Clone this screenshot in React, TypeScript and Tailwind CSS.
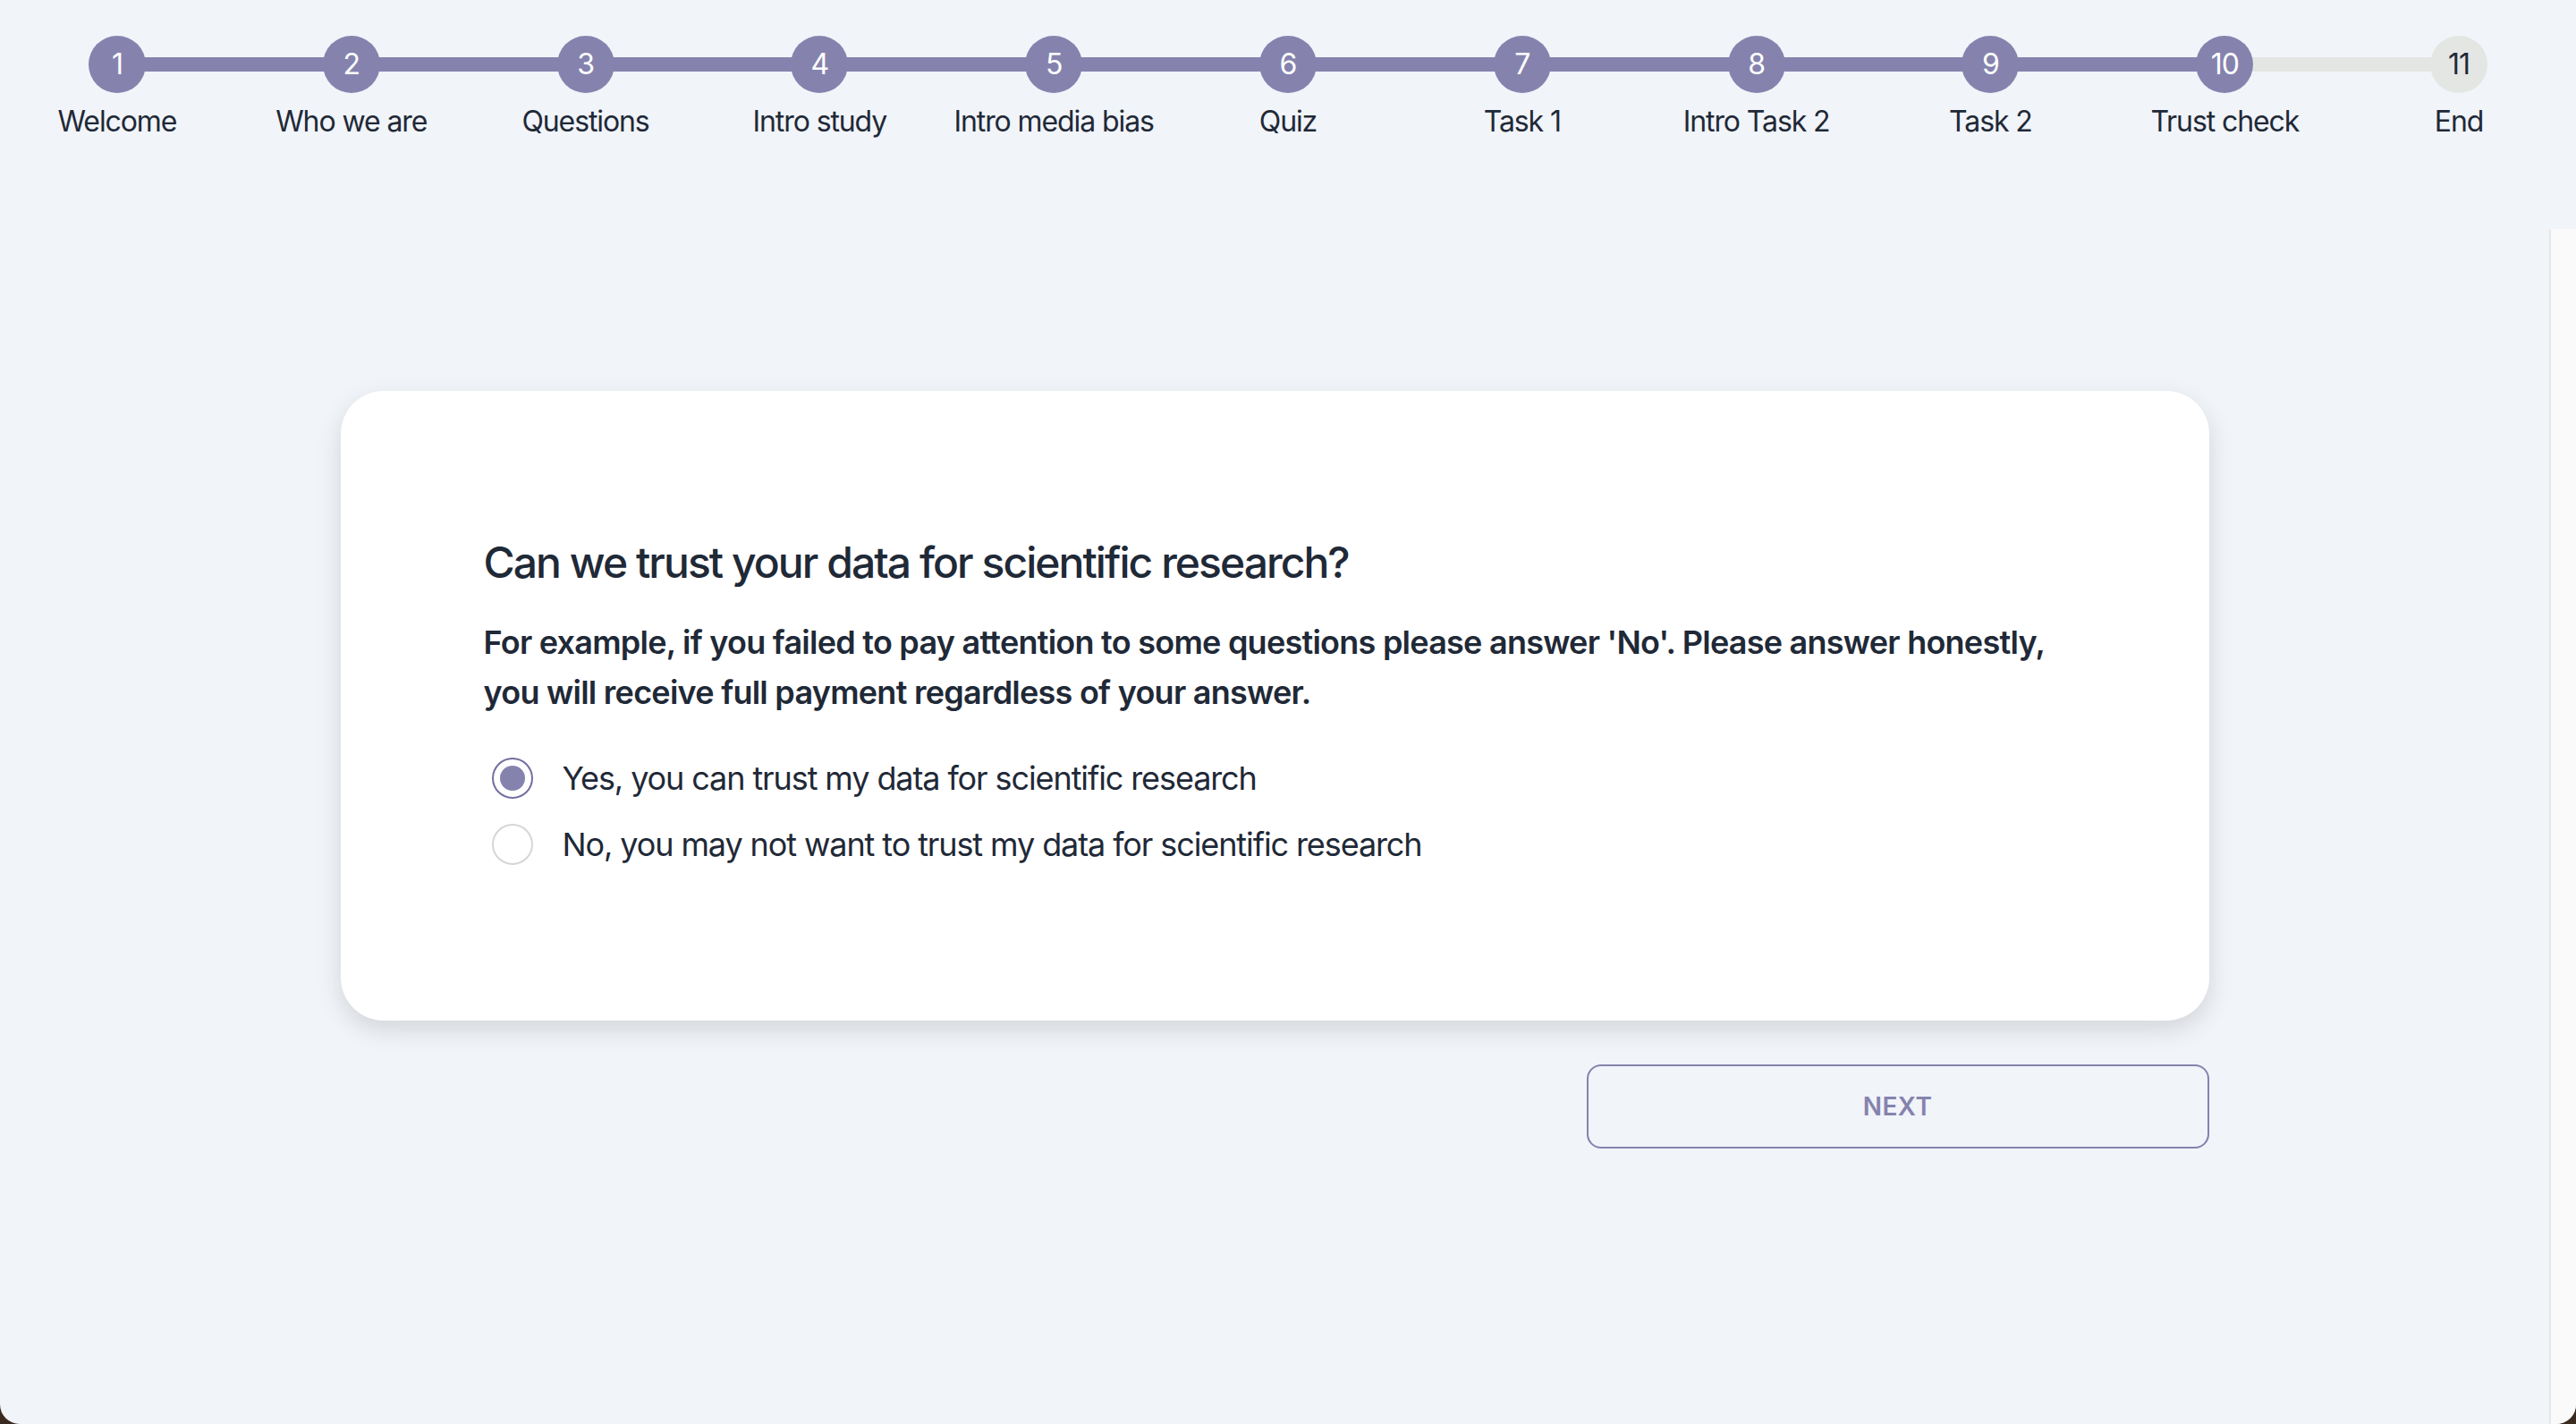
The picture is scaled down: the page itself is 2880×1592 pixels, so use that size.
const steps = [
  "Welcome",
  "Who we are",
  "Questions",
  "Intro study",
  "Intro media bias",
  "Quiz",
  "Task 1",
  "Intro Task 2",
  "Task 2",
  "Trust check",
  "End",
]

const current = 10

function Stepper() {
  return (
    <div className="grid grid-cols-11 h-[256px]">
      {steps.map((label, i) => {
        const n = i + 1
        const done = n <= current
        return (
          <div key={label} className="relative flex flex-col items-center pt-[40px]">
            {i > 0 && (
              <div
                className={
                  n <= current
                    ? "absolute top-[64px] h-[16px] left-[-50%] right-[50%] bg-[#8583ae]"
                    : "absolute top-[64px] h-[16px] left-[-50%] right-[50%] bg-[#e4e6e4]"
                }
              />
            )}
            <div
              className={
                done
                  ? "relative z-10 flex items-center justify-center w-[64px] h-[64px] rounded-full bg-[#8583ae] text-white text-[32px] tracking-[-1px]"
                  : "relative z-10 flex items-center justify-center w-[64px] h-[64px] rounded-full bg-[#e4e6e4] text-[#1f2937] text-[32px] tracking-[-1px]"
              }
            >
              {n}
            </div>
            <div className="mt-[8px] text-[32px] leading-[48px] tracking-[-1.1px] text-[#1f2937] whitespace-nowrap">
              {label}
            </div>
          </div>
        )
      })}
    </div>
  )
}

function Radio({ checked, label }: { checked?: boolean; label: string }) {
  return (
    <label className="flex items-center h-[74px]">
      <span
        className={
          checked
            ? "ml-[9px] flex items-center justify-center w-[46px] h-[46px] rounded-full border-2 border-[#726fa0]"
            : "ml-[9px] flex items-center justify-center w-[46px] h-[46px] rounded-full border-2 border-[#d6d6da]"
        }
      >
        {checked && <span className="w-[28px] h-[28px] rounded-full bg-[#8583ae]" />}
      </span>
      <span className="ml-[33px] text-[36px] tracking-[-1.1px] text-[#1f2937]">{label}</span>
    </label>
  )
}

export default function App() {
  return (
    <div className="w-[2880px] h-[1592px] bg-[#3a2a20] font-['Inter',sans-serif]">
      <div className="flex flex-col h-full bg-[#f1f4f9] rounded-b-[22px] overflow-hidden">
        <Stepper />
        <div className="flex flex-1 min-h-0">
          <main className="flex-1 pt-[181px]">
            <div className="w-[2089px] mx-auto">
              <div className="bg-white rounded-[48px] p-[160px] shadow-[0_10px_28px_rgba(0,0,0,0.13)]">
                <h2 className="text-[48px] leading-[64px] font-medium text-[#1f2937] tracking-[-1.95px]">
                  Can we trust your data for scientific research?
                </h2>
                <p className="mt-[29px] text-[36px] leading-[56px] font-semibold text-[#1f2937] tracking-[-0.75px]">
                  <span className="whitespace-nowrap">
                    For example, if you failed to pay attention to some questions please answer 'No'. Please answer honestly,
                  </span>
                  <br />
                  you will receive full payment regardless of your answer.
                </p>
                <div className="mt-[31px] flex flex-col">
                  <Radio checked label="Yes, you can trust my data for scientific research" />
                  <Radio label="No, you may not want to trust my data for scientific research" />
                </div>
              </div>
              <div className="flex justify-end mt-[49px]">
                <button className="w-[696px] h-[94px] rounded-[16px] border-2 border-[#8583ae] text-[#8583ae] text-[28px] font-semibold tracking-[0.5px]">
                  NEXT
                </button>
              </div>
            </div>
          </main>
          <div className="w-[30px] bg-[#fafafa] border-l-2 border-[#e6e6e6]" />
        </div>
      </div>
    </div>
  )
}
